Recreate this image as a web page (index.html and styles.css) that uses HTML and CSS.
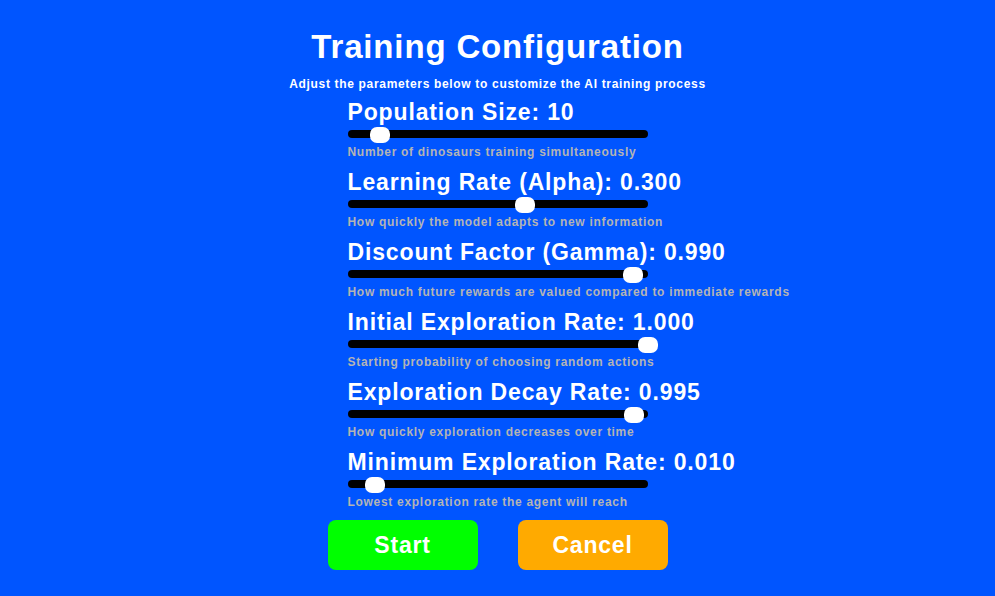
FILE: index.html
```html
<!DOCTYPE html>
<html>
<head>
<meta charset="utf-8">
<link rel="stylesheet" href="styles.css">
</head>
<body>
<main class="page">
  <h1 class="title">Training Configuration</h1>
  <p class="subtitle">Adjust the parameters below to customize the AI training process</p>
  <section class="params">
    <div class="param">
      <div class="label">Population Size: 10</div>
      <div class="slider"><div class="track"></div><div class="thumb" style="left:22px"></div></div>
      <div class="desc">Number of dinosaurs training simultaneously</div>
    </div>
    <div class="param">
      <div class="label">Learning Rate (Alpha): 0.300</div>
      <div class="slider"><div class="track"></div><div class="thumb" style="left:167px"></div></div>
      <div class="desc">How quickly the model adapts to new information</div>
    </div>
    <div class="param">
      <div class="label">Discount Factor (Gamma): 0.990</div>
      <div class="slider"><div class="track"></div><div class="thumb" style="left:275px"></div></div>
      <div class="desc">How much future rewards are valued compared to immediate rewards</div>
    </div>
    <div class="param">
      <div class="label">Initial Exploration Rate: 1.000</div>
      <div class="slider"><div class="track"></div><div class="thumb" style="left:290px"></div></div>
      <div class="desc">Starting probability of choosing random actions</div>
    </div>
    <div class="param">
      <div class="label">Exploration Decay Rate: 0.995</div>
      <div class="slider"><div class="track"></div><div class="thumb" style="left:276px"></div></div>
      <div class="desc">How quickly exploration decreases over time</div>
    </div>
    <div class="param">
      <div class="label">Minimum Exploration Rate: 0.010</div>
      <div class="slider"><div class="track"></div><div class="thumb" style="left:17px"></div></div>
      <div class="desc">Lowest exploration rate the agent will reach</div>
    </div>
  </section>
  <div class="buttons">
    <button class="btn btn-start">Start</button>
    <button class="btn btn-cancel">Cancel</button>
  </div>
</main>
</body>
</html>
```
FILE: styles.css
```css
html, body {
  margin: 0;
  padding: 0;
  background: #0055ff;
}
body {
  width: 995px;
  height: 596px;
  overflow: hidden;
  font-family: "Liberation Sans", Arial, sans-serif;
  font-weight: bold;
  color: #ffffff;
}
.page {
  display: flex;
  flex-direction: column;
  align-items: center;
  padding-top: 31px;
}
.title {
  margin: 0;
  font-size: 33px;
  line-height: 32px;
  letter-spacing: 0.85px;
  font-weight: bold;
}
.subtitle {
  margin: 14px 0 0 0;
  font-size: 12px;
  line-height: 14px;
  letter-spacing: 0.67px;
}
.params {
  width: 300px;
  margin-top: 9px;
  display: flex;
  flex-direction: column;
  gap: 11px;
}
.param {
  display: flex;
  flex-direction: column;
  height: 59px;
}
.label {
  font-size: 23px;
  line-height: 24px;
  white-space: nowrap;
  letter-spacing: 0.85px;
}
.slider {
  position: relative;
  height: 16px;
  margin-top: 3px;
}
.track {
  margin-top: 3px;
  height: 8px;
  width: 300px;
  border-radius: 4px;
  background: #000000;
}
.thumb {
  position: absolute;
  top: 0;
  width: 20px;
  height: 16px;
  border-radius: 7px;
  background: #ffffff;
}
.desc {
  margin-top: 3px;
  font-size: 12px;
  line-height: 14px;
  color: #b4b4b4;
  white-space: nowrap;
  letter-spacing: 0.7px;
}
.buttons {
  display: flex;
  gap: 40px;
  margin-top: 11px;
}
.btn {
  width: 150px;
  height: 50px;
  border: none;
  border-radius: 8px;
  font-family: "Liberation Sans", Arial, sans-serif;
  font-weight: bold;
  font-size: 23px;
  letter-spacing: 0.8px;
  color: #ffffff;
  padding: 0;
}
.btn-start {
  background: #00ff00;
}
.btn-cancel {
  background: #ffaa00;
}
```
